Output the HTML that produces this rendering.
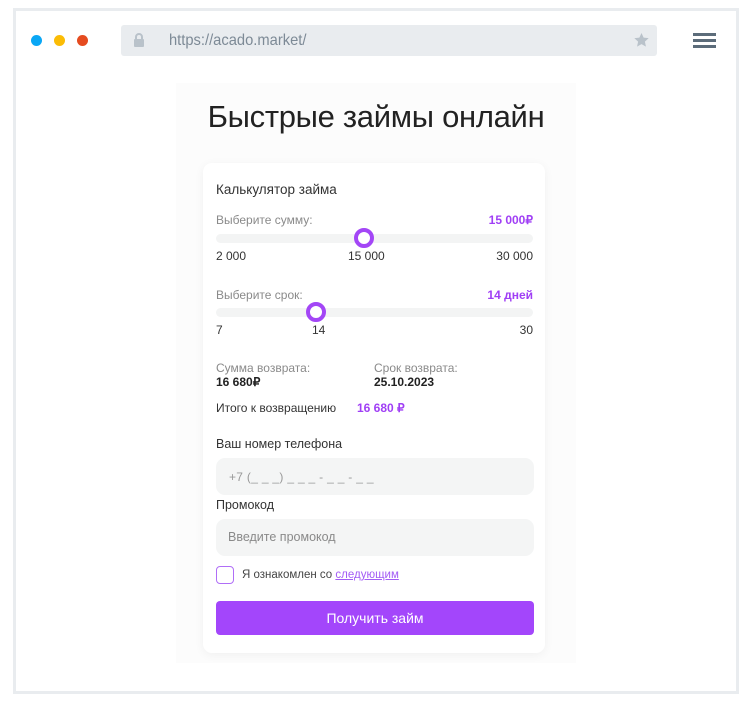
<!DOCTYPE html>
<html><head><meta charset="utf-8"><style>
*{box-sizing:border-box;margin:0;padding:0}
body{width:751px;height:709px;background:#fff;font-family:"Liberation Sans","Noto Sans CJK SC",sans-serif;position:relative;overflow:hidden;color:#222}
.frame{position:absolute;left:13px;top:8px;width:726px;height:686px;border:3px solid #e9ecef}
.dot{position:absolute;top:35px;width:11px;height:11px;border-radius:50%}
.url{position:absolute;left:121px;top:25px;width:536px;height:31px;background:#e9ecef;border-radius:3px}
.url span{position:absolute;left:48px;top:7px;font-size:16px;color:#7d8a96;transform:scaleX(0.92);transform-origin:left}
.ham{position:absolute;left:693px;width:23px;height:3px;background:#5c6c7a}
.panel{position:absolute;left:176px;top:83px;width:400px;height:580px;background:#fcfcfc}
h1{position:absolute;left:176px;width:400px;top:99px;text-align:center;font-weight:normal;font-size:31px;color:#222;letter-spacing:-0.3px}
.card{position:absolute;left:203px;top:163px;width:342px;height:490px;background:#fff;border-radius:9px;box-shadow:0 2px 10px rgba(0,0,0,0.05)}
.t{position:absolute;font-size:12px;white-space:nowrap}
.g{color:#8a8a8a}.p{color:#a03ff5}
.track{position:absolute;left:13px;width:317px;height:9px;background:#f3f4f4;border-radius:5px}
.knob{position:absolute;width:20px;height:20px;border:4px solid #a346f6;border-radius:50%;background:#fff}
.inp{position:absolute;left:13px;width:318px;height:37px;background:#f4f5f5;border-radius:9px}
.btn{position:absolute;left:13px;top:438px;width:318px;height:34px;background:#a346fb;border-radius:4px;color:#fff;font-size:14px;text-align:center;line-height:34px}
</style></head><body>
<div class="frame"></div>
<div class="dot" style="left:31px;background:#0aa7f5"></div>
<div class="dot" style="left:54px;background:#fbbc05"></div>
<div class="dot" style="left:77px;background:#e54b1f"></div>
<div class="url">
<svg style="position:absolute;left:12px;top:8px" width="12" height="15" viewBox="0 0 12 15"><rect x="1" y="6" width="10" height="8" rx="1" fill="#b9c2ca"/><path d="M3 6V4a3 3 0 0 1 6 0v2" stroke="#b9c2ca" stroke-width="2" fill="none"/></svg>
<span>https://acado.market/</span>
<svg style="position:absolute;left:513px;top:8px" width="15" height="14" viewBox="0 0 24 23"><path d="M12 0l3.5 7.6 8.3.9-6.2 5.6 1.7 8.2L12 18.2 4.7 22.3l1.7-8.2L.2 8.5l8.3-.9z" fill="#b9c2ca"/></svg>
</div>
<div class="ham" style="top:33px"></div><div class="ham" style="top:39px"></div><div class="ham" style="top:45px"></div>
<div class="panel"></div>
<h1>Быстрые займы онлайн</h1>
<div class="card">
<div class="t" style="left:13px;top:19px;font-size:13.5px;color:#333">Калькулятор займа</div>
<div class="t g" style="left:13px;top:50px">Выберите сумму:</div>
<div class="t p" style="right:12px;top:50px;font-weight:bold">15 000₽</div>
<div class="track" style="top:71px"></div>
<div class="knob" style="left:151px;top:65px"></div>
<div class="t" style="left:13px;top:86px;color:#333">2 000</div>
<div class="t" style="left:145px;top:86px;color:#333">15 000</div>
<div class="t" style="right:12px;top:86px;color:#333">30 000</div>
<div class="t g" style="left:13px;top:125px">Выберите срок:</div>
<div class="t p" style="right:12px;top:125px;font-weight:bold">14 дней</div>
<div class="track" style="top:145px"></div>
<div class="knob" style="left:103px;top:139px"></div>
<div class="t" style="left:13px;top:160px;color:#333">7</div>
<div class="t" style="left:109px;top:160px;color:#333">14</div>
<div class="t" style="right:12px;top:160px;color:#333">30</div>
<div class="t g" style="left:13px;top:198px">Сумма возврата:</div>
<div class="t" style="left:13px;top:212px;font-weight:bold">16 680₽</div>
<div class="t g" style="left:171px;top:198px">Срок возврата:</div>
<div class="t" style="left:171px;top:212px;font-weight:bold">25.10.2023</div>
<div class="t" style="left:13px;top:238px;color:#333">Итого к возвращению</div>
<div class="t p" style="left:154px;top:238px;font-weight:bold">16 680 ₽</div>
<div class="t" style="left:13px;top:274px;color:#333;font-size:12.5px">Ваш номер телефона</div>
<div class="inp" style="top:295px"><span class="t g" style="left:13px;top:12px;color:#999;letter-spacing:0.3px">+7 (_ _ _) _ _ _ - _ _ - _ _</span></div>
<div class="t" style="left:13px;top:335px;color:#333;font-size:12.5px">Промокод</div>
<div class="inp" style="top:356px"><span class="t g" style="left:12px;top:11px;font-size:12.5px">Введите промокод</span></div>
<div style="position:absolute;left:13px;top:403px;width:18px;height:18px;border:1.5px solid #b06ef7;border-radius:4px"></div>
<div class="t" style="left:39px;top:406px;font-size:11.5px;color:#444">Я ознакомлен со <span style="color:#a35cf5;text-decoration:underline">следующим</span></div>
<div class="btn">Получить займ</div>
</div>
</body></html>
